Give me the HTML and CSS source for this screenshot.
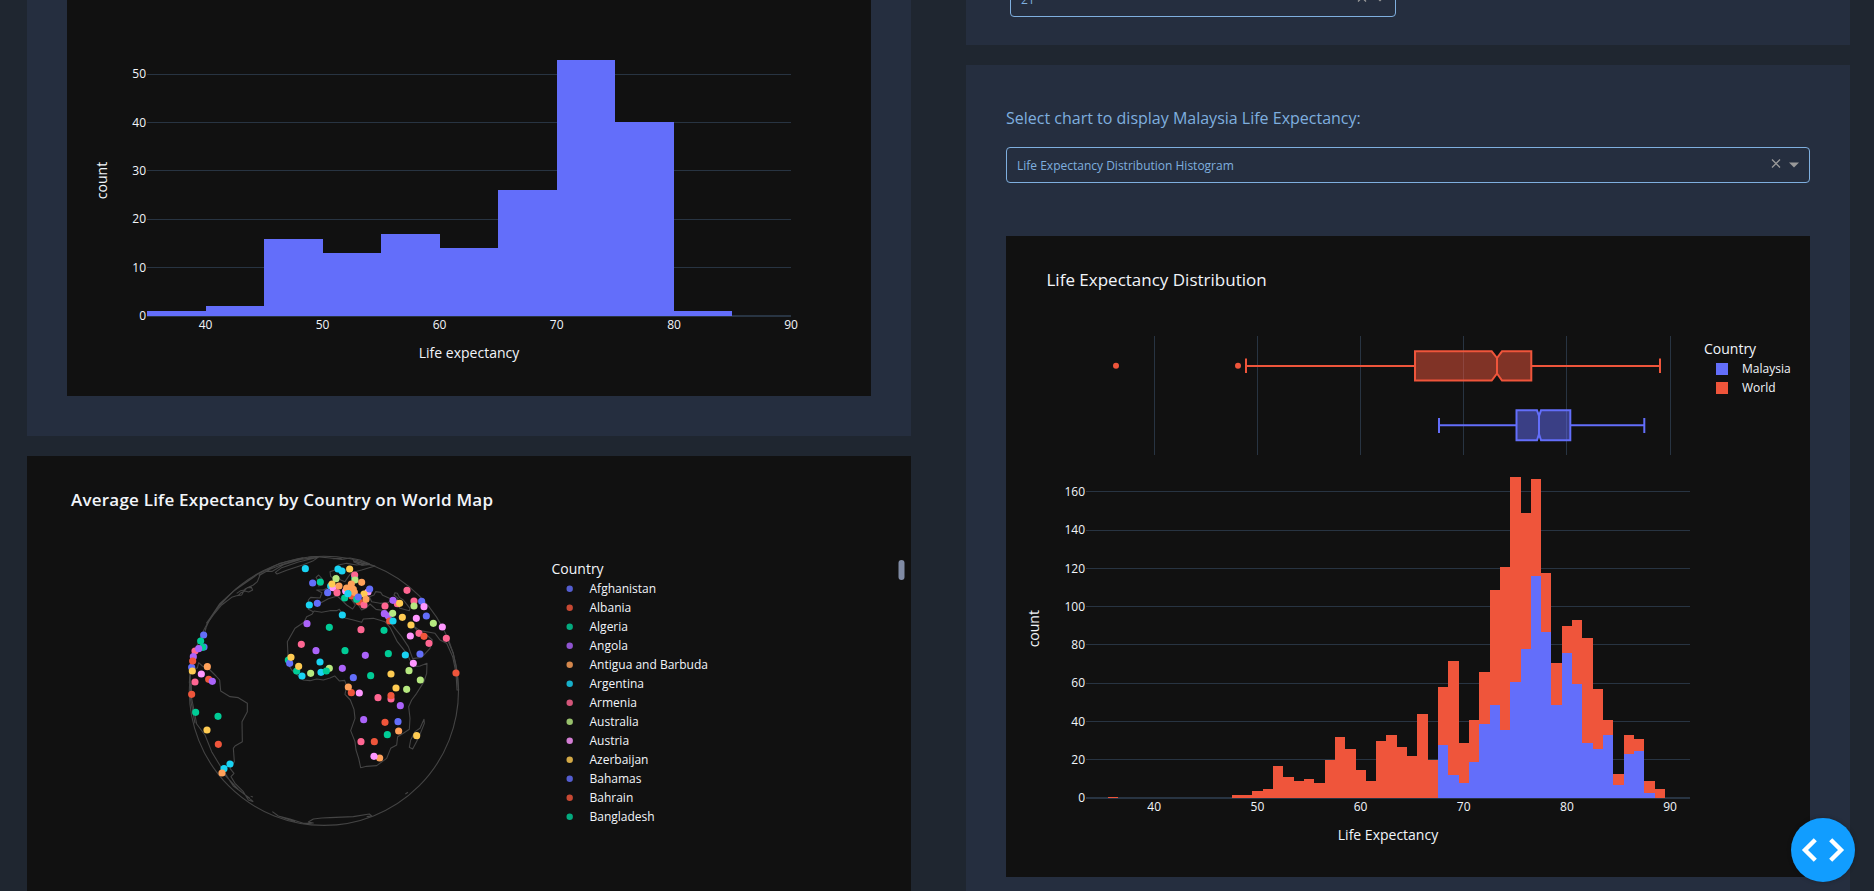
FILE: index.html
```html
<!DOCTYPE html>
<html lang="en">
<head>
<meta charset="utf-8">
<title>Life Expectancy Dashboard</title>
<link rel="stylesheet" href="styles.css">
</head>
<body>
<main class="dashboard">
  <section class="column">
    <div class="card card-histogram">
      <svg class="chart" viewBox="67 0 804 396" width="804" height="396">
        <path class="grid" d="M147 74.5H791M147 122.5H791M147 170.5H791M147 219.5H791M147 267.5H791"/>
        <path class="zero" d="M147 316H791"/>
        <path class="bar-blue" d="M147 316V311H206V306H264V239H323V253H381V234H440V248H498V190H557V60H615V122H674V311H732V316Z"/>
        <g class="tick end">
          <text x="146" y="78.2">50</text><text x="146" y="126.6">40</text><text x="146" y="174.9">30</text>
          <text x="146" y="223.2">20</text><text x="146" y="271.6">10</text><text x="146" y="320">0</text>
        </g>
        <g class="tick mid">
          <text x="205.5" y="329">40</text><text x="322.5" y="329">50</text><text x="439.5" y="329">60</text>
          <text x="556.7" y="329">70</text><text x="674" y="329">80</text><text x="791" y="329">90</text>
        </g>
        <text class="axis mid" x="469" y="358">Life expectancy</text>
        <text class="axis mid" transform="translate(107 180.5) rotate(-90)">count</text>
      </svg>
    </div>
    <div class="card card-map">
      <svg class="chart" viewBox="27 456 884 435" width="884" height="435">
        <text class="title title-map" x="71" y="506" textLength="422">Average Life Expectancy by Country on World Map</text>
        <circle class="coast-line" cx="323.9" cy="690.8" r="134.6"/>
        <g transform="translate(170 540) scale(.33333)">
          <g class="coast">
            <path d="M105 275L112 250 130 225 155 195 185 172 205 166 213 158 225 153 236 156 248 150 244 142 232 143 226 149 212 152 200 160M195 168L215 165 225 147 250 135 262 125 270 105 300 88 340 72 390 58 445 52M105 270L120 235 150 190 200 145 265 101 330 70 400 53M109 250L145 200 190 154 260 105M266 106L290 94 307 94 340 74 400 56M316 97L335 83 385 66 445 52 430 62 400 74 350 91 321 102Z"/>
            <path d="M500 212L480 212 455 217 432 213 426 223 410 230 402 247 375 265 352 305 354 345 350 365 365 390 400 420 420 422 440 417 460 420 480 414 494 408 508 423 524 421 530 438 525 463 541 480 552 508 555 535 542 572 555 605 558 630 566 655 572 683 590 679 620 677 650 655 662 625 680 615 683 590 700 580 718 568 720 535 716 500 725 480 740 460 762 425 770 400 771 370 750 378 730 380 710 340 682 305 660 262 645 245 610 235 580 237 575 247 550 240 525 234 508 208Z"/>
            <path d="M655 240L675 265 695 290 715 320 728 356 755 352 780 325 787 300 770 285 745 275 733 262 720 250 750 272 795 280 810 300 830 310 848 350 858 399 861 450 866 450 860 390 850 340 835 305"/>
            <path d="M430 215L415 208 415 180 422 172 450 174 456 158 440 150 460 150 480 140M444 122L438 112 446 105 456 116 458 135 444 138M450 190L475 176 502 168 515 180 530 195 548 207 556 195 545 180 565 195 575 210 590 203 600 192 618 208 650 213 655 235"/>
            <path d="M482 109L480 95 495 90 505 75 530 70 560 75 580 72 550 62 615 78 575 90 545 98 535 110 525 125 512 120 500 105 497 120ZM560 67L600 73 575 76 550 65M415 52L440 50 480 54 515 58 540 54 570 60 600 72M488 56L515 55"/>
            <path d="M598 170L612 165 617 155 632 157 638 166 665 178 655 188 630 190 605 185ZM672 165L675 158 682 160 688 172 700 180 720 205 718 212 690 205 675 185 685 176Z"/>
            <path d="M58 430L60 400 75 385 82 384 86 368 97 378 120 390 138 408 149 420 152 453 180 470 205 473 232 490 232 515 216 545 217 605 195 618 190 625 193 665 180 685 192 700 183 710 195 730 220 755 235 780 250 785M64 430L65 475 80 552 105 585 125 635 155 685 190 738 240 775M60 395L62 480 75 550M160 700L205 748 250 785M242 769L249 771"/>
            <path d="M307 815L325 828 360 837 400 850 430 849 415 846 430 837 455 834 480 833 550 830 598 822 605 828 590 830M325 828L375 845M400 850H425M706 762L714 757M762 538L763 550 745 595 728 627 718 622 722 600 735 575 750 565Z"/>
          </g>
          <g class="dots">
            <path class="c-green" d="M355 360h0M451 126h0M554 112h0"/>
            <path class="c-cyan" d="M482 138h0M406 86h0M418 195h0M450 366h0M396 408h0M453 397h0M504 87h0M516 93h0M517 225h0M706 345h0M180 672h0M162 686h0"/>
            <path class="c-blue" d="M428 129h0M442 190h0M359 370h0M101 285h0M102 321h0M65 382h0M473 158h0M755 184h0M769 228h0M750 342h0M550 413h0M684 545h0"/>
            <path class="c-pink" d="M394 313h0M75 333h0M75 426h0M554 105h0M573 269h0M645 198h0M682 191h0M711 151h0M732 183h0M747 280h0M777 310h0M829 295h0M624 473h0M663 477h0M573 605h0"/>
            <path class="c-green" d="M380 393h0M478 262h0M92 303h0M98 322h0M642 271h0M655 341h0M525 332h0M602 407h0M77 517h0M144 529h0M652 584h0"/>
            <path class="c-purple" d="M411 251h0M438 332h0M86 326h0M70 350h0M669 181h0M643 221h0M655 228h0M586 346h0M517 385h0M691 497h0M581 539h0"/>
            <path class="c-lpink" d="M94 402h0M489 143h0M527 153h0M594 156h0M762 200h0M739 235h0M817 261h0M721 288h0M730 370h0M568 459h0"/>
            <path class="c-red" d="M68 363h0M116 418h0M659 243h0M762 289h0M858 399h0M544 458h0M663 467h0M65 463h0M145 613h0M645 547h0M613 605h0M546 168h0M568 186h0"/>
            <path class="c-purple" d="M127 424h0"/>
            <path class="c-lgreen" d="M422 400h0M478 385h0M498 116h0M555 120h0M668 220h0M732 198h0M790 250h0M717 392h0M751 420h0M710 448h0"/>
            <path class="c-green" d="M469 393h0M524 174h0M560 178h0"/>
            <path class="c-pink" d="M501 158h0M582 195h0"/>
            <path class="c-yellow" d="M363 352h0M386 379h0M67 393h0M539 87h0M486 132h0M582 162h0M689 190h0M697 232h0M723 255h0M663 402h0M678 444h0M111 570h0M740 587h0"/>
            <path class="c-orange" d="M112 380h0M507 138h0M575 127h0M544 132h0M530 144h0M550 148h0M553 157h0M588 178h0M535 441h0M156 699h0M686 573h0"/>
            <path class="c-blue" d="M565 171h0M599 147h0"/>
            <path class="c-cyan" d="M534 161h0M669 243h0"/>
            <path class="c-orange" d="M629 654h0"/><path class="c-lpink" d="M612 649h0"/>
          </g>
        </g>
        <text class="axis" x="551.5" y="574">Country</text>
        <g class="legend-dots">
          <path class="c-blue" d="M569.7 588.7h0M569.7 778.7h0"/><path class="c-red" d="M569.7 607.7h0M569.7 797.7h0"/>
          <path class="c-green" d="M569.7 626.7h0M569.7 816.7h0"/><path class="c-purple" d="M569.7 645.7h0"/>
          <path class="c-orange" d="M569.7 664.7h0"/><path class="c-cyan" d="M569.7 683.7h0"/>
          <path class="c-pink" d="M569.7 702.7h0"/><path class="c-lgreen" d="M569.7 721.7h0"/>
          <path class="c-lpink" d="M569.7 740.7h0"/><path class="c-yellow" d="M569.7 759.7h0"/>
        </g>
        <g class="tick">
          <text x="589.5" y="593">Afghanistan</text><text x="589.5" y="612">Albania</text>
          <text x="589.5" y="631">Algeria</text><text x="589.5" y="650">Angola</text>
          <text x="589.5" y="669">Antigua and Barbuda</text><text x="589.5" y="688">Argentina</text>
          <text x="589.5" y="707">Armenia</text><text x="589.5" y="726">Australia</text>
          <text x="589.5" y="745">Austria</text><text x="589.5" y="764">Azerbaijan</text>
          <text x="589.5" y="783">Bahamas</text><text x="589.5" y="802">Bahrain</text>
          <text x="589.5" y="821">Bangladesh</text>
        </g>
        <rect class="legend-scroll" x="898.5" y="560" width="6" height="20" rx="3"/>
      </svg>
    </div>
  </section>

  <section class="column">
    <div class="card card-filter">
      <div class="select select-short">
        <span class="select-value">21</span>
        <svg class="select-icons" width="28" height="12" viewBox="0 0 28 12"><path class="clear" d="M1 1.5L9 9.5M9 1.5L1 9.5"/><path class="arrow" d="M18 4.5H28L23 9.5Z"/></svg>
      </div>
    </div>
    <div class="card card-country">
      <label class="select-label">Select chart to display Malaysia Life Expectancy:</label>
      <div class="select">
        <span class="select-value">Life Expectancy Distribution Histogram</span>
        <svg class="select-icons" width="28" height="12" viewBox="0 0 28 12"><path class="clear" d="M1 1.5L9 9.5M9 1.5L1 9.5"/><path class="arrow" d="M18 4.5H28L23 9.5Z"/></svg>
      </div>
      <svg class="chart" viewBox="1006 236 804 641" width="804" height="641">
        <text class="title" x="1046.5" y="286">Life Expectancy Distribution</text>
        <path class="grid" d="M1154.5 336V455M1257.5 336V455M1360.5 336V455M1463.5 336V455M1566.5 336V455M1670.5 336V455"/>
        <g class="box box-red">
          <path class="box-line" d="M1415 366H1246M1531.3 366H1660M1246 358.5V373M1660 358.5V373"/>
          <path d="M1415 351.3H1491.7L1497 358V373.5L1491.7 380.5H1415ZM1531.3 351.3H1502L1497 358V373.5L1502 380.5H1531.3Z"/>
          <circle cx="1116" cy="365.7" r="3"/><circle cx="1238" cy="365.7" r="3"/>
        </g>
        <g class="box box-blue">
          <path class="box-line" d="M1516.5 425.3H1439M1570.3 425.3H1644.3M1439 418V433M1644.3 418V433"/>
          <path d="M1516.5 410.3H1537L1539 416V434L1537 440.3H1516.5ZM1570.3 410.3H1541L1539 416V434L1541 440.3H1570.3Z"/>
        </g>
        <path class="grid" d="M1086 491.5H1690M1086 530.5H1690M1086 568.5H1690M1086 606.5H1690M1086 644.5H1690M1086 683.5H1690M1086 721.5H1690M1086 759.5H1690"/>
        <path class="zero" d="M1086 798H1690"/>
        <path class="bar-red" d="M1108 798V797H1118V798ZM1232 798V795H1252V791H1263V789H1273V766H1283V777H1294V781H1304V779H1314V783H1325V760H1335V737H1345V749H1356V770H1366V781H1376V741H1386V735H1397V747H1407V756H1417V714H1428V760H1438V687H1448V661H1459V743H1469V720H1479V672H1490V590H1500V567H1510V477H1521V513H1531V479H1541V573H1551V663H1562V626H1572V620H1582V638H1593V689H1603V720H1613V774H1624V735H1634V739H1644V781H1655V789H1665V798Z"/>
        <path class="bar-blue" d="M1438 798V745H1448V775H1459V783H1469V762H1479V724H1490V705H1500V730H1510V682H1521V649H1531V576H1541V632H1551V705H1562V653H1572V684H1582V743H1593V749H1603V735H1613V785H1624V754H1634V751H1644V793H1655V798Z"/>
        <g class="tick end">
          <text x="1085" y="496">160</text><text x="1085" y="534">140</text><text x="1085" y="573">120</text>
          <text x="1085" y="611">100</text><text x="1085" y="649">80</text><text x="1085" y="687">60</text>
          <text x="1085" y="726">40</text><text x="1085" y="764">20</text><text x="1085" y="802">0</text>
        </g>
        <g class="tick mid">
          <text x="1154.2" y="811">40</text><text x="1257.4" y="811">50</text><text x="1360.6" y="811">60</text>
          <text x="1463.7" y="811">70</text><text x="1566.9" y="811">80</text><text x="1670" y="811">90</text>
        </g>
        <text class="axis mid" x="1388" y="840">Life Expectancy</text>
        <text class="axis mid" transform="translate(1039 628.7) rotate(-90)">count</text>
        <text class="axis" x="1704" y="354">Country</text>
        <rect class="bar-blue" x="1716" y="363" width="12" height="12"/>
        <rect class="bar-red" x="1716" y="382" width="12" height="12"/>
        <g class="tick"><text x="1742" y="373">Malaysia</text><text x="1742" y="392">World</text></g>
      </svg>
    </div>
  </section>
</main>
<button class="debug-button" aria-label="Debug menu">
  <svg width="64" height="64" viewBox="0 0 64 64"><path d="M24.3 21.8L14 32L24.3 42.2M39.7 21.8L50 32L39.7 42.2"/></svg>
</button>
</body>
</html>
```

FILE: styles.css
```css
* { box-sizing: border-box; }
html, body { height: 100%; }
body {
  margin: 0;
  overflow: hidden;
  background: #1f2630;
  color: #7fafdf;
  font-family: "Open Sans", "Noto Sans", sans-serif;
}
.dashboard {
  display: grid;
  grid-template-columns: 884px 884px;
  column-gap: 55px;
  height: 891px;
  padding-left: 27px;
  overflow: hidden;
}
.column { display: flex; flex-direction: column; gap: 20px; }
.card { flex: none; background: #252e3f; }
.chart { display: block; background: #111; }
.card-histogram { height: 436px; padding: 0 40px; }
.card-map { height: 435px; }
.card-filter {
  display: flex;
  flex-direction: column;
  justify-content: flex-end;
  height: 45px;
  padding: 0 44px 28px;
  overflow: hidden;
}
.card-country { height: 826px; padding: 39px 40px 40px; }

.select-label { display: block; height: 43px; font-size: 16px; line-height: 28px; }
.select {
  display: flex;
  flex: none;
  align-items: center;
  justify-content: space-between;
  height: 36px;
  margin-bottom: 53px;
  padding: 0 10px;
  border: 1px solid #7fafdf;
  border-radius: 4px;
  font-size: 12px;
}
.select-short { width: 386px; margin-bottom: 0; }
.select-icons { margin-top: -2px; }
.clear { fill: none; stroke: #999; stroke-width: 1.3; }
.arrow { fill: #999; }

svg text { fill: #f2f5fa; }
.tick { font-size: 12px; }
.axis { font-size: 14px; }
.title { font-size: 17px; }
.title-map { font-weight: 600; }
.end { text-anchor: end; }
.mid { text-anchor: middle; }
.grid { fill: none; stroke: #283442; stroke-width: 1; shape-rendering: crispEdges; }
.zero { fill: none; stroke: #283442; stroke-width: 2; shape-rendering: crispEdges; }
.bar-blue { fill: #636efa; shape-rendering: crispEdges; }
.bar-red { fill: #ef553b; shape-rendering: crispEdges; }

.box { stroke-width: 2; }
.box-red { stroke: #ef553b; fill: rgba(239, 85, 59, .5); }
.box-blue { stroke: #636efa; fill: rgba(99, 110, 250, .5); }
.box-red circle { fill: #ef553b; stroke: none; }

.coast-line { fill: none; stroke: #444; stroke-width: 1.1; }
.coast { fill: none; stroke: #444; stroke-width: 3.3; stroke-linejoin: round; }
.dots { fill: none; stroke-width: 21.5; stroke-linecap: round; }
.legend-dots { fill: none; stroke-width: 6.4; stroke-linecap: round; opacity: .82; }
.c-blue { stroke: #636efa; }
.c-red { stroke: #ef553b; }
.c-green { stroke: #00cc96; }
.c-purple { stroke: #ab63fa; }
.c-orange { stroke: #ffa15a; }
.c-cyan { stroke: #19d3f3; }
.c-pink { stroke: #ff6692; }
.c-lgreen { stroke: #b6e880; }
.c-lpink { stroke: #ff97ff; }
.c-yellow { stroke: #fecb52; }
.legend-scroll { fill: #808ba4; }

.debug-button {
  position: fixed;
  right: 19px;
  bottom: 9px;
  width: 64px;
  height: 64px;
  padding: 0;
  border: 0;
  border-radius: 50%;
  background: #119dff;
  box-shadow: 0 0 4px rgba(0, 0, 0, .25);
}
.debug-button svg { display: block; fill: none; stroke: #fff; stroke-width: 4.4; }
```
